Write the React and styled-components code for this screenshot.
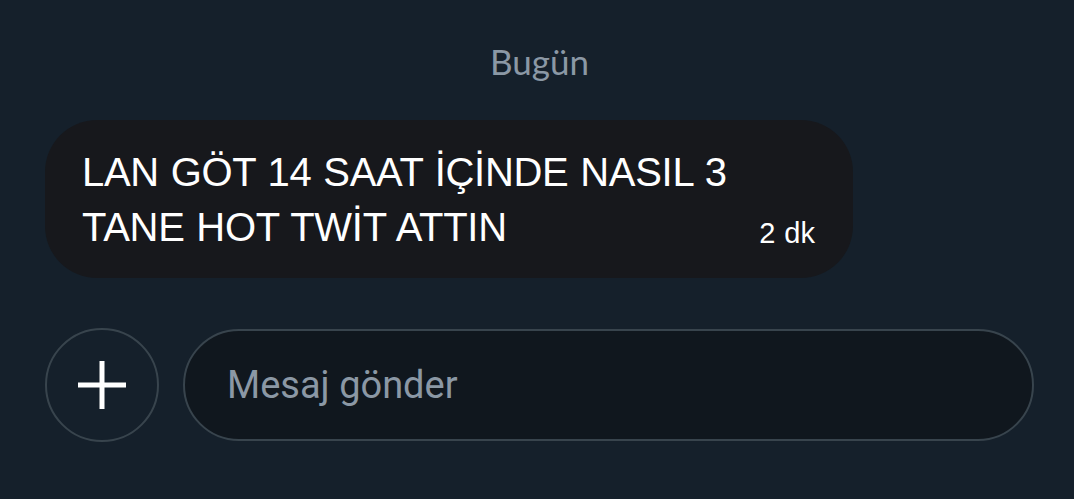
import React from "react";
import styled, { createGlobalStyle } from "styled-components";

const GlobalStyle = createGlobalStyle`
  html, body {
    margin: 0;
    padding: 0;
    background: #15202b;
  }
  * {
    box-sizing: border-box;
  }
`;

const Page = styled.div`
  width: 1074px;
  height: 499px;
  background: #15202b;
  padding: 38px 40px 0 45px;
  display: flex;
  flex-direction: column;
  font-family: Roboto, "Noto Sans", sans-serif;
`;

const DateLabel = styled.div`
  text-align: center;
  font-family: Lato, "Noto Sans", sans-serif;
  font-size: 35px;
  line-height: 46px;
  color: #8b98a5;
`;

const Bubble = styled.div`
  margin-top: 36px;
  width: 808px;
  background: #17181c;
  border-radius: 52px;
  padding: 25px 38px 23px 37px;
  position: relative;
  font-family: "Liberation Sans", Arial, sans-serif;
`;

const MessageText = styled.div`
  color: #ffffff;
  font-size: 40px;
  line-height: 55px;
  letter-spacing: -0.3px;
  word-spacing: 1px;
  max-width: 695px;
`;

const Time = styled.span`
  position: absolute;
  right: 38px;
  bottom: 28px;
  color: #ffffff;
  font-size: 29px;
  line-height: 33px;
  word-spacing: 1px;
`;

const Composer = styled.div`
  margin-top: 50px;
  display: flex;
  align-items: center;
  gap: 24px;
`;

const PlusButton = styled.button`
  width: 114px;
  height: 114px;
  flex-shrink: 0;
  border-radius: 50%;
  border: 2px solid #38444d;
  background: #15202b;
  display: flex;
  align-items: center;
  justify-content: center;
  padding: 0;
`;

const InputBox = styled.div`
  flex: 1;
  height: 112px;
  border-radius: 56px;
  border: 2px solid #38444d;
  background: #10171e;
  display: flex;
  align-items: center;
  padding-left: 42px;
  color: #8b98a5;
  font-size: 38px;
`;

export default function App() {
  return (
    <>
      <GlobalStyle />
      <Page>
        <DateLabel>Bugün</DateLabel>
        <Bubble>
          <MessageText>LAN GÖT 14 SAAT İÇİNDE NASIL 3 TANE HOT TWİT ATTIN</MessageText>
          <Time>2 dk</Time>
        </Bubble>
        <Composer>
          <PlusButton type="button">
            <svg width="50" height="50" viewBox="0 0 50 50">
              <path d="M25 1v48M1 25h48" stroke="#fff" strokeWidth="5" />
            </svg>
          </PlusButton>
          <InputBox>Mesaj gönder</InputBox>
        </Composer>
      </Page>
    </>
  );
}
